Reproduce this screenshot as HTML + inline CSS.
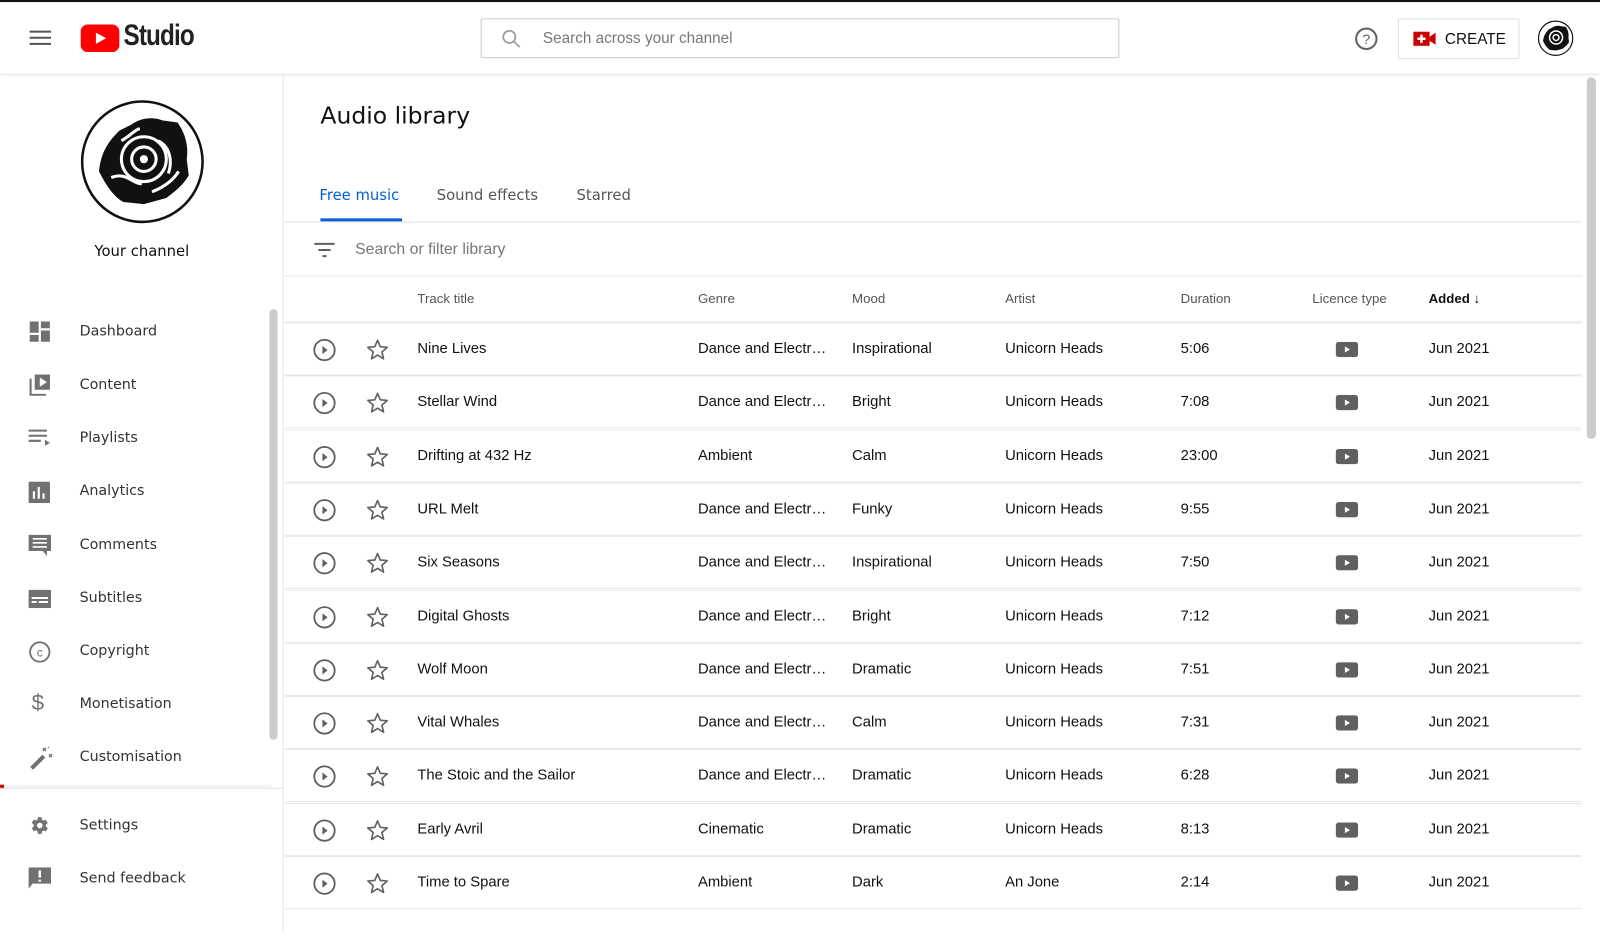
<!DOCTYPE html>
<html><head><meta charset="utf-8"><style>
*{margin:0;padding:0;box-sizing:border-box}
body{width:1600px;height:914px;overflow:hidden;background:#fff;font-family:"Liberation Sans",sans-serif;color:#0d0d0d;position:relative}
#wrap{position:absolute;left:0;top:0;width:1568px;height:896px;transform:scale(1.020408);transform-origin:0 0}
.abs{position:absolute}
.top{position:absolute;left:0;top:0;width:1568px;height:72px;background:#fff;border-top:2px solid #111;box-shadow:0 1px 4px rgba(0,0,0,.12);z-index:2}
.side{position:absolute;left:0;top:72px;width:278px;height:842px;border-right:1px solid #e5e5e5}
.nav{position:absolute;left:78px;color:#333;font-family:"DejaVu Sans","Liberation Sans",sans-serif;font-size:14px}
.ic{position:absolute;left:28px}
.row{position:absolute;left:279px;width:1271px;height:52px;border-bottom:1px solid #e8e8e8;font-size:14.5px;color:#111}
.row span{position:absolute;top:17px}
.hd{position:absolute;top:14px;font-size:13px;color:#555}
</style></head><body><div id="wrap">
<div class="top">
 <div class="abs" style="left:29px;top:28px;width:21px;height:2px;background:#555;box-shadow:0 6px 0 #555,0 12px 0 #555"></div>
 <svg class="abs" style="left:79px;top:22px" width="38" height="28" viewBox="0 0 38 28"><rect width="38" height="27" rx="7" fill="#f00"/><path d="M15 8l10 5.5-10 5.5z" fill="#fff"/></svg>
 <div class="abs" style="left:121px;top:17px;font-size:29px;font-weight:bold;letter-spacing:-1px;transform:scaleX(.82);transform-origin:left;color:#212121">Studio</div>
 <div class="abs" style="left:471px;top:16px;width:626px;height:39px;border:1px solid #ccc;border-radius:2px">
  <svg class="abs" style="left:18px;top:8px" width="22" height="22" viewBox="0 0 24 24"><circle cx="10" cy="10" r="6.5" fill="none" stroke="#999" stroke-width="1.8"/><path d="M15 15l6 6" stroke="#999" stroke-width="1.8"/></svg>
  <div class="abs" style="left:60px;top:10px;font-size:15px;color:#777">Search across your channel</div>
 </div>
 <svg class="abs" style="left:1327px;top:24px" width="24" height="24" viewBox="0 0 24 24"><circle cx="12" cy="12" r="10" fill="none" stroke="#606060" stroke-width="2"/><text x="12" y="17" font-size="14" text-anchor="middle" fill="#606060" font-family="Liberation Sans">?</text></svg>
 <div class="abs" style="left:1370px;top:16px;width:119px;height:40px;border:1px solid #e0e0e0;border-radius:2px">
  <svg class="abs" style="left:14px;top:12px" width="22" height="14" viewBox="0 0 22 14"><rect width="16" height="14" fill="#c00"/><path d="M16 5l6-4v12l-6-4z" fill="#c00"/><path d="M8 3v8M4 7h8" stroke="#fff" stroke-width="2.4"/></svg>
  <div class="abs" style="left:45px;top:11px;font-size:15px;font-weight:500;color:#111">CREATE</div>
 </div>
 <svg class="abs" style="left:1507px;top:18px" width="35" height="35" viewBox="0 0 121 121"><circle cx="60.5" cy="60.5" r="58" fill="#fff" stroke="#111" stroke-width="4"/>
 <path d="M18 70C20 50 28 40 38 30L50 24C58 18 70 16 80 20L95 22C102 32 106 44 104 58L106 74C100 84 92 90 84 96L62 102L42 100C34 96 26 86 18 70Z" fill="#111"/>
 <circle cx="62" cy="58" r="22" fill="none" stroke="#fff" stroke-width="5"/><circle cx="62" cy="58" r="10" fill="none" stroke="#fff" stroke-width="5"/></svg>
</div>
<div class="side">
 <svg class="abs" style="left:79px;top:26px" width="121" height="121" viewBox="0 0 121 121"><circle cx="60.5" cy="60.5" r="59" fill="#fff" stroke="#111" stroke-width="2.5"/>
 <path d="M18 70C20 50 28 40 38 30L50 24C58 18 70 16 80 20L95 22C102 32 106 44 104 58L106 74C100 84 92 90 84 96L62 102L42 100C34 96 26 86 18 70Z" fill="#111"/>
 <circle cx="62" cy="58" r="22" fill="none" stroke="#fff" stroke-width="3"/><circle cx="62" cy="58" r="12" fill="none" stroke="#fff" stroke-width="3"/><circle cx="62" cy="58" r="4" fill="#fff"/><path d="M30 76C45 70 50 82 60 82M76 40C88 46 90 60 86 72M40 40C50 34 52 30 58 28M70 90C80 86 90 80 96 70" stroke="#fff" stroke-width="3" fill="none"/></svg>
 <div class="abs" style="left:0;width:278px;top:167px;text-align:center;font-size:14.5px;font-family:'DejaVu Sans',sans-serif;color:#111">Your channel</div>
 <div class="abs" style="left:264px;top:231px;width:8px;height:422px;background:#ccc;border-radius:4px"></div>
 <svg class="ic" style="top:242px" width="22" height="22" viewBox="0 0 20 20"><path d="M1 1h8v10H1zM11 1h8v6h-8zM11 9h8v10h-8zM1 13h8v6H1z" fill="#717171"/></svg>
 <div class="nav" style="top:245px">Dashboard</div>
 <svg class="ic" style="top:294px" width="22" height="22" viewBox="0 0 22 22"><path d="M6 1h15v15H6z" fill="#717171"/><path d="M11 4l7 4.5-7 4.5z" fill="#fff"/><path d="M2 5v16h15" stroke="#717171" stroke-width="2" fill="none"/></svg>
 <div class="nav" style="top:297px">Content</div>
 <svg class="ic" style="top:348px" width="22" height="18" viewBox="0 0 22 18"><path d="M0 2h18M0 7h18M0 12h12" stroke="#717171" stroke-width="2"/><path d="M16 11l5 3-5 3z" fill="#717171"/></svg>
 <div class="nav" style="top:349px">Playlists</div>
 <svg class="ic" style="top:400px" width="21" height="21" viewBox="0 0 20 20"><rect width="20" height="20" rx="1" fill="#717171"/><path d="M5 9v7M9.5 5v11M14 11v5" stroke="#fff" stroke-width="2"/></svg>
 <div class="nav" style="top:401px">Analytics</div>
 <svg class="ic" style="top:452px" width="22" height="22" viewBox="0 0 22 22"><path d="M0 0h22v16h-4v5l-4-5H0z" fill="#717171"/><path d="M4 4h14M4 8h14M4 12h14" stroke="#fff" stroke-width="1.6"/></svg>
 <div class="nav" style="top:454px">Comments</div>
 <svg class="ic" style="top:506px" width="22" height="18" viewBox="0 0 22 18"><rect width="22" height="18" rx="1" fill="#717171"/><path d="M3 12h5M10 12h9M3 8h16" stroke="#fff" stroke-width="2"/></svg>
 <div class="nav" style="top:506px">Subtitles</div>
 <svg class="ic" style="top:556px" width="22" height="22" viewBox="0 0 22 22"><circle cx="11" cy="11" r="9.5" fill="none" stroke="#717171" stroke-width="1.8"/><text x="11" y="15.5" font-size="12" text-anchor="middle" fill="#717171" font-family="Liberation Sans">c</text></svg>
 <div class="nav" style="top:558px">Copyright</div>
 <div class="ic" style="top:604px;left:31px;font-size:22px;color:#717171">$</div>
 <div class="nav" style="top:610px">Monetisation</div>
 <svg class="ic" style="top:659px" width="24" height="24" viewBox="0 0 24 24"><path d="M3 22l12-12" stroke="#717171" stroke-width="4"/><path d="M14 2l3 3M17 2l-3 3M20 8l3 3M23 8l-3 3M19 1l1 1" stroke="#717171" stroke-width="1.3"/></svg>
 <div class="nav" style="top:662px">Customisation</div>
 <div class="abs" style="left:0;top:697px;width:4px;height:4px;background:#c00"></div>
 <div class="abs" style="left:4px;top:697px;width:262px;height:3px;background:#f4f4f4"></div>
 <div class="abs" style="left:0;top:700px;width:278px;height:1px;background:#e0e0e0"></div>
 <svg class="ic" style="top:726px" width="22" height="22" viewBox="0 0 24 24"><path d="M19.4 13a7.5 7.5 0 000-2l2.1-1.6-2-3.5-2.5 1a7 7 0 00-1.7-1L15 3h-4l-.4 2.7a7 7 0 00-1.7 1l-2.5-1-2 3.5L6.6 11a7.5 7.5 0 000 2l-2.1 1.6 2 3.5 2.5-1a7 7 0 001.7 1L11 21h4l.4-2.7a7 7 0 001.7-1l2.5 1 2-3.5z" fill="#717171" transform="translate(-1 0)"/><circle cx="12" cy="12" r="3" fill="#fff"/></svg>
 <div class="nav" style="top:729px">Settings</div>
 <svg class="ic" style="top:778px" width="22" height="22" viewBox="0 0 22 22"><path d="M0 0h22v16H4l-4 5z" fill="#717171"/><path d="M11 3v7M11 12v2" stroke="#fff" stroke-width="2.4"/></svg>
 <div class="nav" style="top:781px">Send feedback</div>
</div>
<div class="abs" style="left:1555px;top:76px;width:9px;height:354px;background:#ccc;border-radius:4px"></div>
<div class="abs" style="left:314px;top:101px;font-size:23px;font-family:'DejaVu Sans',sans-serif;color:#111">Audio library</div>
<div class="abs" style="left:313px;top:184px;font-size:14.5px;color:#065fd4;font-family:'DejaVu Sans',sans-serif">Free music</div>
<div class="abs" style="left:314px;top:214px;width:80px;height:3px;background:#065fd4"></div>
<div class="abs" style="left:428px;top:184px;font-size:14.5px;color:#555;font-family:'DejaVu Sans',sans-serif">Sound effects</div>
<div class="abs" style="left:565px;top:184px;font-size:14.5px;color:#555;font-family:'DejaVu Sans',sans-serif">Starred</div>
<div class="abs" style="left:279px;top:217px;width:1271px;height:1px;background:#e5e5e5"></div>
<svg class="abs" style="left:307px;top:237px" width="22" height="16" viewBox="0 0 22 16"><path d="M1 2h20M5 8h12M9 14h4" stroke="#606060" stroke-width="2"/></svg>
<div class="abs" style="left:348px;top:236px;font-size:15.5px;color:#777">Search or filter library</div>
<div class="abs" style="left:279px;top:270px;width:1271px;height:1px;background:#e5e5e5"></div>
<div class="row" style="top:271px;height:45px">
 <div class="hd" style="left:130px">Track title</div><div class="hd" style="left:405px">Genre</div><div class="hd" style="left:556px">Mood</div><div class="hd" style="left:706px">Artist</div><div class="hd" style="left:878px">Duration</div><div class="hd" style="left:1007px">Licence type</div><div class="hd" style="left:1121px;color:#111;font-weight:bold">Added &#8595;</div>
</div>
<div id="rows"></div>
</div>
<script>
const d=[["Nine Lives","Dance and Electr…","Inspirational","Unicorn Heads","5:06"],["Stellar Wind","Dance and Electr…","Bright","Unicorn Heads","7:08"],["Drifting at 432 Hz","Ambient","Calm","Unicorn Heads","23:00"],["URL Melt","Dance and Electr…","Funky","Unicorn Heads","9:55"],["Six Seasons","Dance and Electr…","Inspirational","Unicorn Heads","7:50"],["Digital Ghosts","Dance and Electr…","Bright","Unicorn Heads","7:12"],["Wolf Moon","Dance and Electr…","Dramatic","Unicorn Heads","7:51"],["Vital Whales","Dance and Electr…","Calm","Unicorn Heads","7:31"],["The Stoic and the Sailor","Dance and Electr…","Dramatic","Unicorn Heads","6:28"],["Early Avril","Cinematic","Dramatic","Unicorn Heads","8:13"],["Time to Spare","Ambient","Dark","An Jone","2:14"]];
let h='';d.forEach((r,i)=>{const t=316+i*52.3;h+=`<div class="row" style="top:${t}px;border-top:1px solid #e8e8e8">
<svg class="abs" style="left:27px;top:14px" width="24" height="24" viewBox="0 0 24 24"><circle cx="12" cy="12" r="10" fill="none" stroke="#606060" stroke-width="1.8"/><path d="M10 8l5 4-5 4z" fill="#606060"/></svg>
<svg class="abs" style="left:79px;top:14px" width="24" height="24" viewBox="0 0 24 24"><path d="M12 2.5l2.7 6.3 6.8.6-5.2 4.5 1.6 6.7L12 17l-5.9 3.6 1.6-6.7-5.2-4.5 6.8-.6z" fill="none" stroke="#606060" stroke-width="1.6" stroke-linejoin="round"/></svg>
<span style="left:130px">${r[0]}</span><span style="left:405px">${r[1]}</span><span style="left:556px">${r[2]}</span><span style="left:706px">${r[3]}</span><span style="left:878px">${r[4]}</span>
<svg class="abs" style="left:1030px;top:18px" width="22" height="15" viewBox="0 0 22 15"><rect width="22" height="15" rx="3" fill="#606060"/><path d="M9 4.5l5 3-5 3z" fill="#fff"/></svg>
<span style="left:1121px">Jun 2021</span></div>`});
document.getElementById('rows').innerHTML=h;
</script>
</body></html>
